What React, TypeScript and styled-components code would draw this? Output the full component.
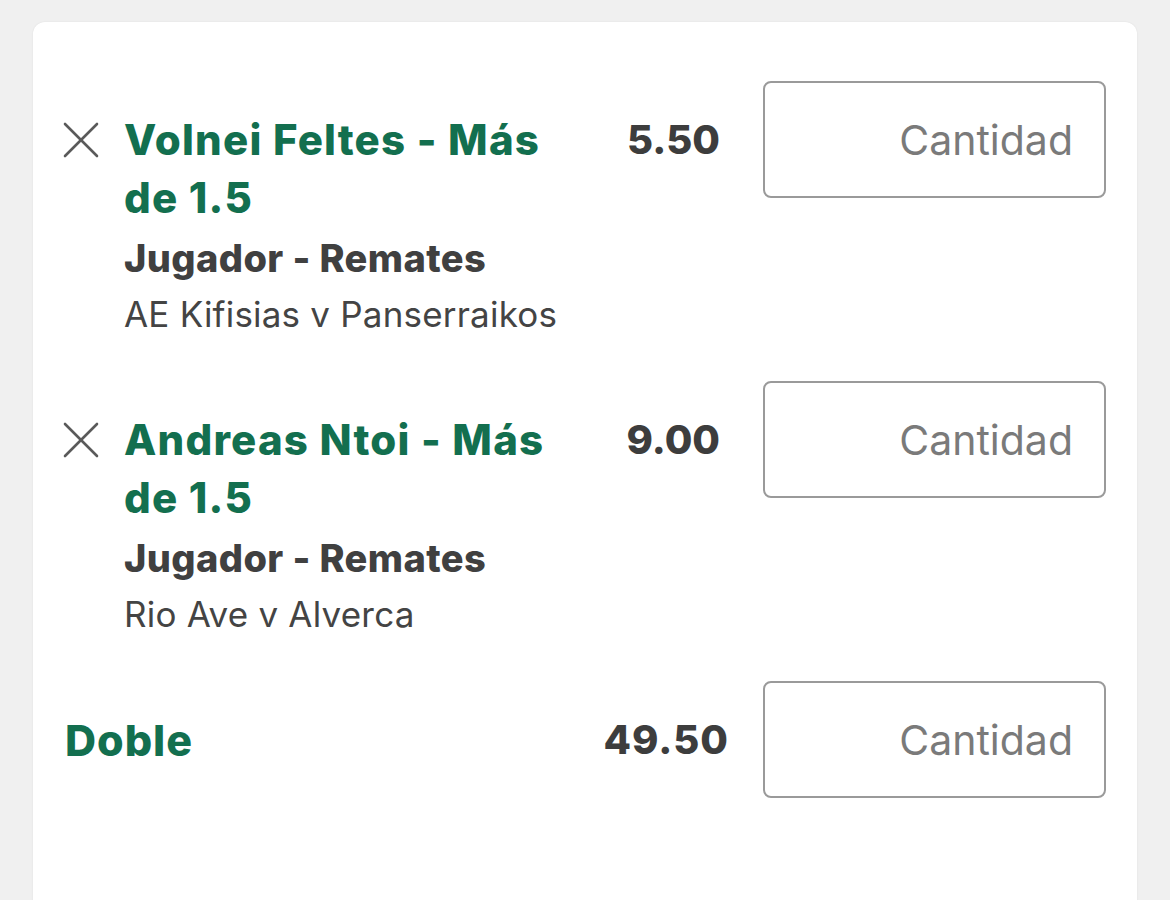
import React from "react";
import styled, { createGlobalStyle } from "styled-components";

const GlobalStyle = createGlobalStyle`
  body {
    margin: 0;
    background-color: #f0f0f0;
    font-family: Inter, "Noto Sans", "Liberation Sans", sans-serif;
  }
`;

const Page = styled.div`
  padding: 22px 33px 0 33px;
  height: 900px;
  box-sizing: border-box;
  overflow: hidden;
`;

const Card = styled.div`
  background-color: #ffffff;
  border-radius: 12px;
  box-shadow: 0 0 2px rgba(0, 0, 0, 0.08);
  padding: 59px 31px 0 30px;
  min-height: 940px;
  display: flex;
  flex-direction: column;
  gap: 43px;
`;

const Row = styled.div<{ $center?: boolean }>`
  display: grid;
  grid-template-columns: 61px 440px 156px 386px;
  align-items: ${(p) => (p.$center ? "center" : "start")};
`;

const Remove = styled.button`
  width: 36px;
  height: 36px;
  margin-top: 41px;
  padding: 0;
  border: none;
  background: none;
  cursor: pointer;
  display: flex;
`;

const Info = styled.div`
  padding-top: 30px;
  display: flex;
  flex-direction: column;
`;

const Title = styled.div`
  color: #136f4f;
  font-size: 42px;
  font-weight: 800;
  line-height: 58px;
  letter-spacing: 1.2px;
`;

const Market = styled.div`
  color: #404040;
  font-size: 38px;
  font-weight: 800;
  line-height: 50px;
  margin-top: 6px;
  letter-spacing: 0.4px;
`;

const Event = styled.div`
  color: #444444;
  font-size: 35px;
  font-weight: 400;
  line-height: 48px;
  margin-top: 7px;
  letter-spacing: 0.2px;
`;

const MultiLabel = styled.div`
  grid-column: 1 / 3;
  padding-left: 2px;
  color: #136f4f;
  font-size: 43px;
  font-weight: 800;
  letter-spacing: 1px;
`;

const Odds = styled.div<{ $shift?: number }>`
  color: #3d3d3d;
  font-size: 40px;
  font-weight: 800;
  text-align: right;
  margin-right: ${(p) => -(p.$shift ?? 0)}px;
  padding-top: ${(p) => (p.$shift ? 0 : 36)}px;
  line-height: 46px;
  letter-spacing: ${(p) => (p.$shift ? 1 : 0)}px;
`;

const Stake = styled.input`
  justify-self: end;
  width: 343px;
  height: 117px;
  box-sizing: border-box;
  border: 2px solid #9a9a9a;
  border-radius: 8px;
  padding: 0 31px 0 16px;
  font-family: inherit;
  font-size: 41px;
  text-align: right;
  color: #333;
  outline: none;

  &::placeholder {
    color: #7a7a7a;
  }
`;

const CloseIcon = () => (
  <svg width="36" height="36" viewBox="0 0 36 36">
    <g stroke="#5a5a5a" strokeWidth="2.6" strokeLinecap="round">
      <line x1="2" y1="2" x2="34" y2="34" />
      <line x1="34" y1="2" x2="2" y2="34" />
    </g>
  </svg>
);

interface Selection {
  title: string;
  market: string;
  event: string;
  odds: string;
}

const selections: Selection[] = [
  {
    title: "Volnei Feltes - Más de 1.5",
    market: "Jugador - Remates",
    event: "AE Kifisias v Panserraikos",
    odds: "5.50",
  },
  {
    title: "Andreas Ntoi - Más de 1.5",
    market: "Jugador - Remates",
    event: "Rio Ave v Alverca",
    odds: "9.00",
  },
];

const App: React.FC = () => {
  return (
    <Page>
      <GlobalStyle />
      <Card>
        {selections.map((s) => (
          <Row key={s.title}>
            <Remove aria-label="Quitar">
              <CloseIcon />
            </Remove>
            <Info>
              <Title>{s.title}</Title>
              <Market>{s.market}</Market>
              <Event>{s.event}</Event>
            </Info>
            <Odds>{s.odds}</Odds>
            <Stake placeholder="Cantidad" />
          </Row>
        ))}
        <Row $center>
          <MultiLabel>Doble</MultiLabel>
          <Odds $shift={9}>49.50</Odds>
          <Stake placeholder="Cantidad" />
        </Row>
      </Card>
    </Page>
  );
};

export default App;
